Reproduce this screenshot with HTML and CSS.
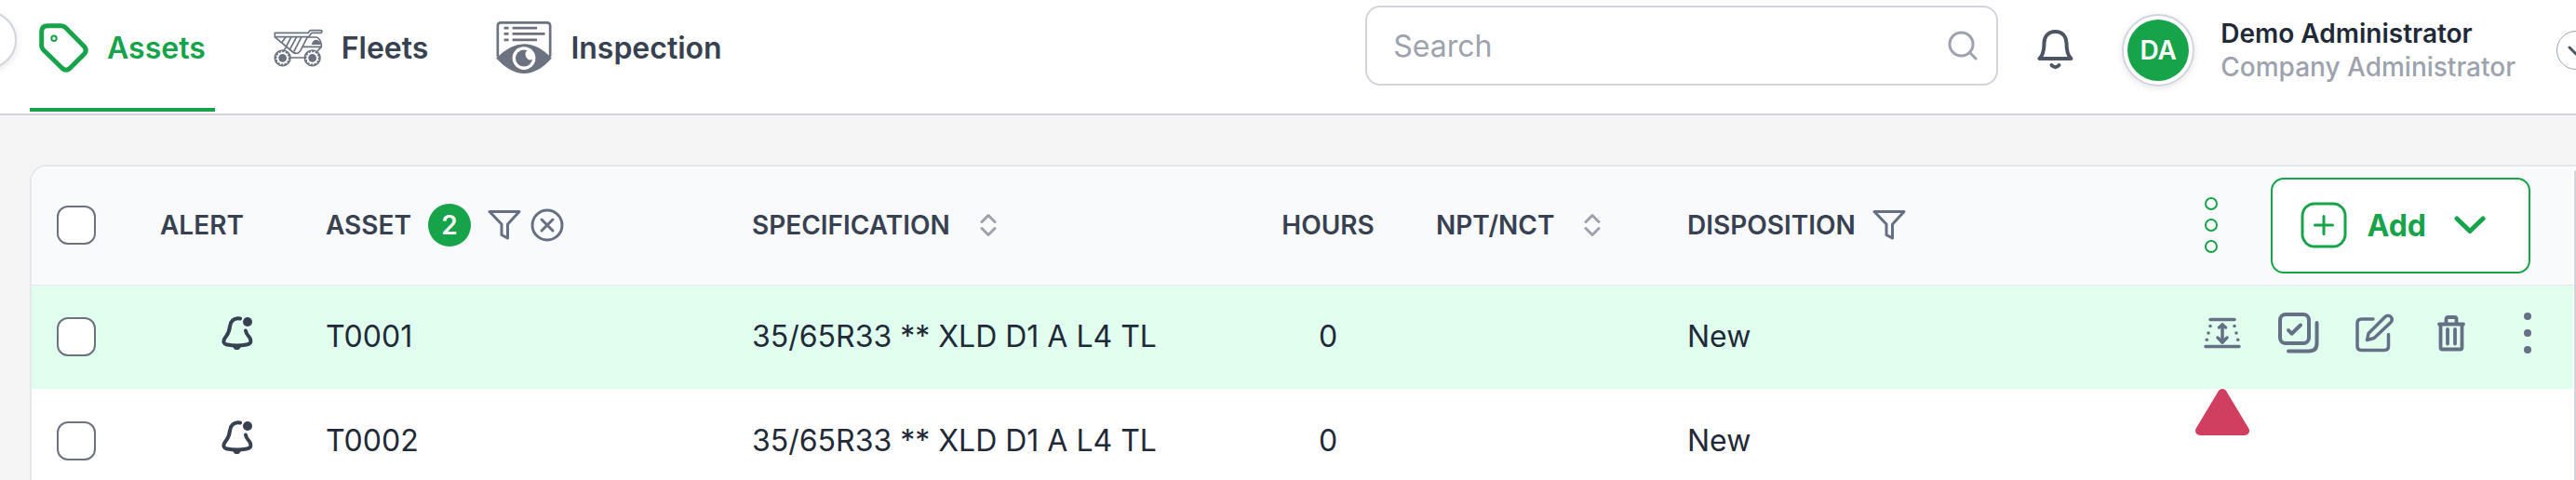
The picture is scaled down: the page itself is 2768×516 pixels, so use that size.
FILE: index.html
```
<!DOCTYPE html>
<html lang="en">

<head>
    <meta charset="UTF-8">
    <meta name="viewport" content="width=device-width, initial-scale=1.0">
    <title>Assets</title>
    <link rel="stylesheet" href="styles.css">
</head>

<body>

    <!-- shared icons -->
    <svg class="sprite" aria-hidden="true">
        <symbol id="filter" viewBox="0 0 36 34">
            <path d="M2 2.5H34L21.5 16V31L15 27.5V16Z" />
        </symbol>
        <symbol id="sort" viewBox="0 0 18 26">
            <path d="M2 9.5L9 2.500L16 9.500M2 16.500L9 23.500L16 16.500" />
        </symbol>
        <symbol id="alert" viewBox="0 0 34 36">
            <path d="M20 2.500C13 1 9.500 6 9 11C8.500 18 6 20 3 24.500C1.500 28 3 30 6 30.500Q16.500 32.500 27 30.500C31 30 32 28 31 24.500C30 21 27 21 26 15.500" />
            <path class="solid" d="M11.500 32H21.500L19 35.500Q16.500 37 14 35.500Z" />
            <circle class="solid" cx="28" cy="6" r="5" />
        </symbol>
    </svg>

    <header>
        <button class="collapse" aria-label="Collapse menu"></button>
        <nav>
            <a class="active" href="#assets">
                <svg width="53" height="53" viewBox="0 0 53 53">
                    <path d="M9 2.700H24Q26.500 2.700 28.200 4.500L48.500 25Q52 29 48.500 33L33 48.500Q29 52 25 48.500L4.500 28.500Q2.700 26.700 2.700 24.300V9Q2.700 2.700 9 2.700Z" stroke-width="5" />
                    <circle cx="16" cy="16.300" r="2.700" stroke-width="2" />
                </svg>
                Assets
            </a>
            <a href="#fleets">
                <svg width="53" height="41" viewBox="0 0 159 123">
                    <g stroke-width="5">
                        <path d="M4 13H111L118 5H152Q156 5 156 9Q156 13 152 13H125Q121 13 119 17L114 26H4Z" />
                        <path d="M6 28L62 75Q70 81 79 78Q84 75 88 68L108 28" />
                        <path d="M38 28L28 42M56 28L42 54M73 28L53 65M89 28L66 72" />
                        <path d="M108 27H138Q150 30 154 50V58H96M154 58L142 71" />
                        <path d="M56 93H98M42 57L34 68" />
                        <circle cx="29" cy="94" r="25" />
                        <circle cx="125" cy="94" r="25" />
                    </g>
                    <g stroke-width="5" stroke-dasharray="3 8">
                        <circle cx="29" cy="94" r="21" />
                        <circle cx="125" cy="94" r="21" />
                    </g>
                    <g class="solid">
                        <circle cx="29" cy="94" r="13" />
                        <circle cx="125" cy="94" r="13" />
                        <path d="M122 51Q126 35 139 35Q150 38 153 51Z" />
                    </g>
                </svg>
                Fleets
            </a>
            <a href="#inspection">
                <svg width="60" height="56" viewBox="0 0 178 167">
                    <path d="M5 110V14Q5 4 15 4H163Q173 4 173 14V110" stroke-width="8" />
                    <g stroke-width="8" stroke-linecap="butt">
                        <path class="bars" d="M25 21H40M25 40H40M25 59H40M52 21H131M52 40H156M52 59H131" />
                    </g>
                    <path class="solid" d="M0 118Q45 72 89 72Q135 72 178 118Q135 167 89 167Q45 167 0 118Z" />
                    <circle class="white" cx="89" cy="118" r="37" />
                    <circle class="solid" cx="89" cy="118" r="27" />
                    <path class="white" d="M102 90Q88 101 96 115Q104 128 118 121V96Z" />
                </svg>
                Inspection
            </a>
        </nav>

        <div class="tools">
            <div class="search">
                <input type="search" placeholder="Search" aria-label="Search">
                <svg width="32" height="32" viewBox="0 0 32 32">
                    <circle cx="14.500" cy="14.500" r="12.500" />
                    <path d="M24 24L30 30" />
                </svg>
            </div>
            <button class="bell" aria-label="Notifications">
                <svg width="39" height="44" viewBox="0 0 39 44">
                    <path d="M19.500 2C10.500 2 7.500 9 7.500 14C7.500 22 6 28 2.500 31H36.500C33 28 31.500 22 31.500 14C31.500 9 28.500 2 19.500 2Z" />
                    <path d="M15.500 38Q19.500 42.500 23.500 38" />
                </svg>
            </button>
            <div class="avatar"><span>DA</span></div>
            <div class="user">
                <strong>Demo Administrator</strong>
                <span>Company Administrator</span>
            </div>
            <button class="more" aria-label="Account menu">
                <svg width="18" height="11" viewBox="0 0 18 11">
                    <path d="M2 2L9 9L16 2" />
                </svg>
            </button>
        </div>
    </header>

    <main>
        <div class="card">
            <table>
                <colgroup>
                    <col class="col-check">
                    <col class="col-alert">
                    <col class="col-asset">
                    <col class="col-spec">
                    <col class="col-hours">
                    <col class="col-npt">
                    <col class="col-disposition">
                    <col>
                </colgroup>
                <thead>
                    <tr>
                        <th class="check"><input type="checkbox" aria-label="Select all"></th>
                        <th>ALERT</th>
                        <th>
                            <div class="heading">
                                ASSET
                                <span class="count">2</span>
                                <button aria-label="Filter asset"><svg class="filter" width="36" height="34"><use href="#filter" /></svg></button>
                                <button class="clear" aria-label="Clear filter">
                                    <svg width="36" height="36" viewBox="0 0 36 36">
                                        <circle cx="18" cy="18" r="16" />
                                        <path d="M12 12L24 24M24 12L12 24" />
                                    </svg>
                                </button>
                            </div>
                        </th>
                        <th>
                            <div class="heading sortable">
                                SPECIFICATION
                                <button aria-label="Sort by specification"><svg class="sort" width="18" height="26"><use href="#sort" /></svg></button>
                            </div>
                        </th>
                        <th class="hours">HOURS</th>
                        <th class="npt">
                            <div class="heading sortable">
                                NPT/NCT
                                <button aria-label="Sort by NPT/NCT"><svg class="sort" width="18" height="26"><use href="#sort" /></svg></button>
                            </div>
                        </th>
                        <th>
                            <div class="heading">
                                DISPOSITION
                                <button aria-label="Filter disposition"><svg class="filter" width="36" height="34"><use href="#filter" /></svg></button>
                            </div>
                        </th>
                        <th>
                            <div class="controls">
                                <button class="columns" aria-label="Columns">
                                    <svg width="16" height="62" viewBox="0 0 16 62">
                                        <circle cx="8" cy="8" r="6" />
                                        <circle cx="8" cy="31" r="6" />
                                        <circle cx="8" cy="54" r="6" />
                                    </svg>
                                </button>
                                <button class="add">
                                    <svg width="50" height="50" viewBox="0 0 50 50">
                                        <rect x="2" y="2" width="46" height="46" rx="13" />
                                        <path d="M25 15.500V34.500M15.500 25H34.500" />
                                    </svg>
                                    Add
                                    <svg class="chevron" width="34" height="20" viewBox="0 0 34 20">
                                        <path d="M3 3L17 16.500L31 3" />
                                    </svg>
                                </button>
                            </div>
                        </th>
                    </tr>
                </thead>
                <tbody>
                    <tr class="selected">
                        <td class="check"><input type="checkbox" aria-label="Select T0001"></td>
                        <td class="alert"><svg width="34" height="36"><use href="#alert" /></svg></td>
                        <td>T0001</td>
                        <td>35/65R33 ** XLD D1 A L4 TL</td>
                        <td class="hours">0</td>
                        <td class="npt"></td>
                        <td>New</td>
                        <td>
                            <div class="actions">
                                <button aria-label="Tread depth">
                                    <svg width="40" height="34" viewBox="0 0 40 34" stroke-width="3.500">
                                        <path d="M7 2.500H33M2 31.500H38M20 8V27" />
                                        <path d="M16.500 11L20 8L23.500 11M15 22L20 27L25 22" />
                                        <g class="solid">
                                            <circle cx="7" cy="9.500" r="1.800" />
                                            <circle cx="5" cy="17" r="1.800" />
                                            <circle cx="3.300" cy="24.300" r="1.800" />
                                            <circle cx="33" cy="9.500" r="1.800" />
                                            <circle cx="35" cy="17" r="1.800" />
                                            <circle cx="36.700" cy="24.300" r="1.800" />
                                        </g>
                                    </svg>
                                    <svg class="pointer" width="58" height="50" viewBox="0 0 58 50">
                                        <path d="M29 5L53 45H5Z" />
                                    </svg>
                                </button>
                                <button aria-label="Inspect">
                                    <svg width="44" height="44" viewBox="0 0 44 44" stroke-width="4">
                                        <rect x="2" y="2" width="31" height="31" rx="6" />
                                        <path d="M11 19L14.500 22.700L24 13.500" />
                                        <path d="M41.500 11V33Q41.500 41.500 33 41.500H11" />
                                    </svg>
                                </button>
                                <button aria-label="Edit">
                                    <svg width="42" height="42" viewBox="0 0 42 42" stroke-width="3.500">
                                        <path d="M19 6H6.500Q2 6 2 10.500V35Q2 39.500 6.500 39.500H31Q35.500 39.500 35.500 35V22.500" />
                                        <path d="M12.500 28.500L14 21.500L32 3.500Q35 1 38 3.500Q40.500 6.500 38 9.500L20 26.500Z" />
                                    </svg>
                                </button>
                                <button aria-label="Delete">
                                    <svg width="30" height="39" viewBox="0 0 30 39" stroke-width="3.800">
                                        <path d="M2 9.500H28M9.500 9V4Q9.500 2 11.500 2H18.500Q20.500 2 20.500 4V9" />
                                        <path d="M3.500 10V34.500Q3.500 36.500 5.500 36.500H24.500Q26.500 36.500 26.500 34.500V10M11 15V30.500M19 15V30.500" />
                                    </svg>
                                </button>
                                <button aria-label="More actions">
                                    <svg width="8" height="44" viewBox="0 0 8 44">
                                        <g class="solid">
                                            <circle cx="4" cy="4" r="4" />
                                            <circle cx="4" cy="22" r="4" />
                                            <circle cx="4" cy="40" r="4" />
                                        </g>
                                    </svg>
                                </button>
                            </div>
                        </td>
                    </tr>
                    <tr>
                        <td class="check"><input type="checkbox" aria-label="Select T0002"></td>
                        <td class="alert"><svg width="34" height="36"><use href="#alert" /></svg></td>
                        <td>T0002</td>
                        <td>35/65R33 ** XLD D1 A L4 TL</td>
                        <td class="hours">0</td>
                        <td class="npt"></td>
                        <td>New</td>
                        <td></td>
                    </tr>
                </tbody>
            </table>
            <div class="scrollbar"></div>
        </div>
    </main>

</body>

</html>
```
FILE: styles.css
```
* {
    box-sizing: border-box;
    margin: 0;
    padding: 0;
}

body {
    font-family: Inter, "Liberation Sans", sans-serif;
    font-size: 32px;
    color: #1f2937;
    background-color: #f5f5f5;
    height: 100vh;
    overflow: hidden;
    display: flex;
    flex-direction: column;
}

svg {
    display: block;
    flex-shrink: 0;
    fill: none;
    stroke: currentColor;
    stroke-linecap: round;
    stroke-linejoin: round;
}

.solid {
    fill: currentColor;
    stroke: none;
}

.white {
    fill: #fff;
    stroke: none;
}

.bars {
    stroke-linecap: butt;
}

.sprite {
    position: absolute;
    width: 0;
    height: 0;
}

button {
    font: inherit;
    color: inherit;
    background: none;
    border: none;
    cursor: pointer;
}

header {
    position: relative;
    display: flex;
    justify-content: space-between;
    align-items: flex-start;
    height: 124px;
    flex-shrink: 0;
    padding-left: 32px;
    background-color: #fff;
    border-bottom: 2px solid #d1d5db;
}

/* half hidden behind the left edge */
.collapse {
    position: absolute;
    left: -44px;
    top: 12px;
    width: 62px;
    height: 62px;
    border: 2px solid #d1d5db;
    border-radius: 50%;
    background-color: #fff;
    box-shadow: 0 2px 8px rgba(0, 0, 0, 0.1);
}

nav {
    display: flex;
    gap: 53px;
}

nav a {
    display: flex;
    align-items: center;
    gap: 20px;
    height: 120px;
    padding: 0 10px 14px;
    border-bottom: 4px solid transparent;
    color: #374151;
    font-weight: 600;
    text-decoration: none;
}

nav a svg {
    color: #6b7280;
}

nav a.active,
nav a.active svg {
    color: #16a34a;
}

nav a.active {
    border-color: #16a34a;
}

.tools {
    display: flex;
    align-items: center;
    height: 108px;
    margin-right: -21px;
}

.search {
    display: flex;
    align-items: center;
    width: 680px;
    height: 86px;
    margin: 0 42px 10px 0;
    padding: 0 20px 0 28px;
    border: 2px solid #d1d5db;
    border-radius: 16px;
    color: #9ca3af;
}

.search input {
    flex: 1;
    min-width: 0;
    border: none;
    outline: none;
    background: none;
    font: inherit;
    color: #1f2937;
}

.search input::placeholder {
    color: #9ca3af;
}

.search svg {
    stroke-width: 3;
}

.bell {
    margin-right: 52px;
    color: #4b5563;
}

.bell svg {
    stroke-width: 4;
}

.avatar {
    width: 78px;
    height: 78px;
    margin-right: 28px;
    padding: 4px;
    border: 2px solid #d1d5db;
    border-radius: 50%;
    box-shadow: 0 2px 8px rgba(0, 0, 0, 0.1);
}

.avatar span {
    display: flex;
    align-items: center;
    justify-content: center;
    height: 100%;
    border-radius: 50%;
    background-color: #16a34a;
    color: #fff;
    font-size: 28px;
    font-weight: 600;
}

.user {
    display: flex;
    flex-direction: column;
    margin-right: 44px;
    font-size: 28px;
    line-height: 36px;
    white-space: nowrap;
}

.user strong {
    font-weight: 600;
}

.user span {
    color: #9ca3af;
    font-weight: 500;
}

.more {
    display: flex;
    align-items: center;
    justify-content: center;
    width: 42px;
    height: 42px;
    border: 1px solid #9ca3af;
    border-radius: 50%;
    color: #4b5563;
}

.more svg {
    stroke-width: 3;
}

main {
    flex: 1;
    padding: 53px 0 0 32px;
}

.card {
    display: flex;
    height: 100%;
    background-color: #fff;
    border: 2px solid #e5e7eb;
    border-width: 2px 0 0 2px;
    border-top-left-radius: 18px;
    overflow: hidden;
}

.scrollbar {
    width: 2px;
    margin: 4px 0 0 1px;
    background-color: #d1d5db;
    border-top-left-radius: 2px;
}

table {
    flex: 1;
    table-layout: fixed;
    border-collapse: collapse;
    align-self: flex-start;
}

.col-check {
    width: 138px;
}

.col-alert {
    width: 178px;
}

.col-asset {
    width: 458px;
}

.col-spec {
    width: 539px;
}

.col-hours {
    width: 160px;
}

.col-npt {
    width: 306px;
}

.col-disposition {
    width: 400px;
}

th {
    height: 127px;
    background-color: #f9fafb;
    border-bottom: 1px solid #e5e7eb;
    color: #374151;
    font-size: 28px;
    font-weight: 600;
    text-align: left;
    white-space: nowrap;
}

td {
    height: 112px;
    padding-bottom: 2px;
    white-space: nowrap;
}

.selected td {
    background-color: #e0ffee;
}

.check {
    padding: 0 0 0 27px;
}

.check input {
    display: block;
    appearance: none;
    width: 42px;
    height: 42px;
    border: 2px solid #6b7280;
    border-radius: 12px;
    background-color: #fff;
}

.alert {
    padding: 0 0 8px 66px;
    color: #374151;
}

.alert svg {
    stroke-width: 4;
}

.hours {
    text-align: center;
}

.npt {
    padding-left: 36px;
}

.heading {
    display: flex;
    align-items: center;
    gap: 18px;
}

.sortable {
    gap: 32px;
}

.heading button {
    color: #667085;
}

.heading .clear {
    margin-left: -8px;
}

.heading svg {
    stroke-width: 3;
}

.heading .sort {
    color: #9ca3af;
}

.count {
    display: flex;
    align-items: center;
    justify-content: center;
    width: 46px;
    height: 46px;
    border-radius: 50%;
    background-color: #16a34a;
    color: #fff;
}

.controls {
    display: flex;
    align-items: center;
    justify-content: flex-end;
    gap: 56px;
    padding-right: 46px;
    color: #16a34a;
}

.columns svg {
    fill: #fff;
    stroke-width: 2;
}

.add {
    display: flex;
    align-items: center;
    gap: 22px;
    height: 103px;
    padding: 0 46px 0 30px;
    border: 2px solid #16a34a;
    border-radius: 14px;
    background-color: #fff;
    font-size: 32px;
    font-weight: 700;
}

.add svg {
    stroke-width: 3;
}

.add .chevron {
    margin-left: 8px;
    stroke-width: 5;
}

.actions {
    display: flex;
    justify-content: flex-end;
    gap: 34px;
    padding: 0 25px 6px 0;
    color: #667085;
}

.actions button {
    position: relative;
    display: flex;
    align-items: center;
    justify-content: center;
    width: 48px;
    height: 48px;
}

.actions .pointer {
    position: absolute;
    top: 84px;
    left: -5px;
    z-index: 1;
    fill: #d13f60;
    stroke: #d13f60;
    stroke-width: 10;
}
```
